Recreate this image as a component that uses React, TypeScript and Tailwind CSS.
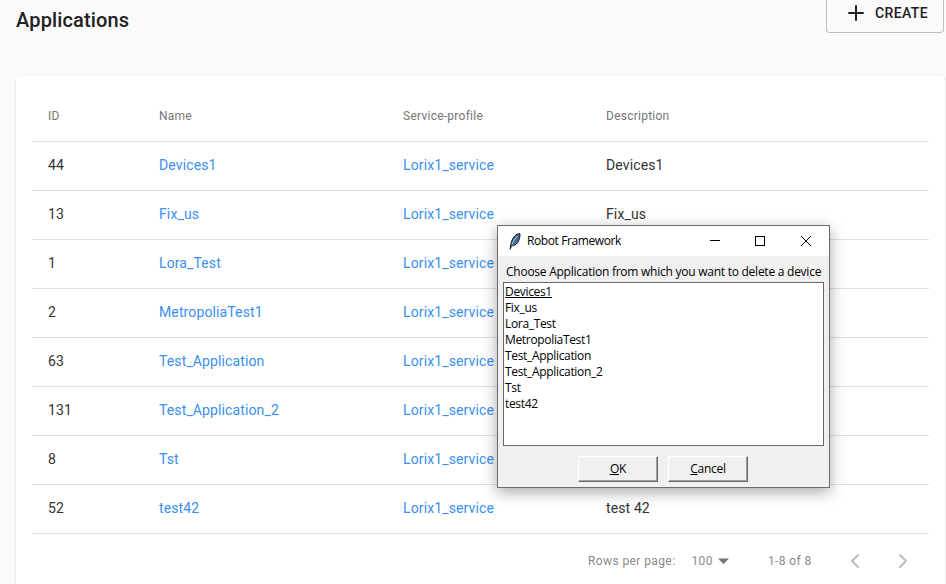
import { ChevronLeft, ChevronRight, Plus } from "lucide-react";

const rows = [
  ["44", "Devices1", "Devices1"],
  ["13", "Fix_us", "Fix_us"],
  ["1", "Lora_Test", "Lora_Test"],
  ["2", "MetropoliaTest1", "MetropoliaTest1"],
  ["63", "Test_Application", "Test_Application"],
  ["131", "Test_Application_2", "Test_Application_2"],
  ["8", "Tst", "Tst"],
  ["52", "test42", "test 42"],
];

const items = ["Devices1", "Fix_us", "Lora_Test", "MetropoliaTest1", "Test_Application", "Test_Application_2", "Tst", "test42"];

function Feather() {
  return (
    <svg width="12" height="17" viewBox="0 0 12 17" fill="none">
      <path d="M1.200 16.500C1.300 12 2.500 6.500 5.500 3.200 7 1.600 9 .7 10.800.6c.5 2-.2 5-1.300 7.400-1.100 2.300-3.200 4.200-5.500 4.800" fill="#4a6f96" stroke="#111" strokeWidth="1" />
      <path d="M3 11.500C4 8.500 5.500 6 8 3.500" stroke="#c8d8e8" strokeWidth="0.8" />
    </svg>
  );
}

function WinButton({ children }: { children: React.ReactNode }) {
  return <button className="w-[46px] h-[30px] flex items-center justify-center">{children}</button>;
}

function DlgButton({ u, rest }: { u: string; rest: string }) {
  return (
    <button className="w-20 h-[26px] bg-[#f0f0f0] border border-t-[#fff] border-l-[#fff] border-r-[#696969] border-b-[#696969] shadow-[inset_-1px_-1px_0_#a0a0a0] text-[12px] tracking-[-0.3px] text-black">
      <span className="underline">{u}</span>
      {rest}
    </button>
  );
}

export default function App() {
  return (
    <div className="relative w-[946px] h-[584px] overflow-hidden bg-[#fafafa] font-['Roboto',sans-serif]">
      <header className="flex justify-between items-start h-[33px] pl-4 pr-[2px]">
        <h1 className="text-[20px] leading-[40px] font-medium tracking-[0.15px] text-[#212121]">Applications</h1>
        <button className="w-[118px] h-[33px] flex items-center justify-center gap-[7px] pl-[2px] pb-[6px] border border-t-0 border-[#bdbdbd] rounded-b-[4px] text-[14px] font-medium tracking-[0.4px] text-[#212121]">
          <Plus size={24} strokeWidth={2} />
          CREATE
        </button>
      </header>

      <main className="mt-[43px] ml-4 mr-px bg-white rounded-[4px] shadow-[0_1px_3px_rgba(0,0,0,0.15)] px-4 pt-4 h-[600px]">
        <div className="grid grid-cols-[127px_244px_203px_1fr] h-[50px] pb-[2px] items-center border-b border-[#e0e0e0] text-[12px] tracking-[0.25px] text-[#757575]">
          <div className="pl-4">ID</div>
          <div>Name</div>
          <div>Service-profile</div>
          <div>Description</div>
        </div>
        {rows.map((r) => (
          <div key={r[0]} className="grid grid-cols-[127px_244px_203px_1fr] h-[49px] pb-[2px] items-center border-b border-[#e0e0e0] text-[14px] tracking-[0.12px] text-[#333333]">
            <div className="pl-4">{r[0]}</div>
            <div className="text-[#3a8fef]">{r[1]}</div>
            <div className="text-[#3a8fef]">Lorix1_service</div>
            <div>{r[2]}</div>
          </div>
        ))}
        <div className="flex items-center h-[53px] text-[12px] tracking-[0.4px] text-[#8a8a8a] pl-[556px]">
          <span>Rows per page:</span>
          <span className="ml-4">100</span>
          <svg className="ml-[5px]" width="11" height="6" viewBox="0 0 11 6"><path d="M0 0.500h11L5.500 6z" fill="#757575" /></svg>
          <span className="ml-[39px]">1-8 of 8</span>
          <ChevronLeft className="ml-[31px] text-[#bdbdbd]" size={24} />
          <ChevronRight className="ml-6 text-[#bdbdbd]" size={24} />
        </div>
      </main>

      <div className="absolute left-[497px] top-[225px] w-[333px] h-[263px] bg-[#f0f0f0] border border-[#6d6d6d] shadow-[0_4px_14px_rgba(0,0,0,0.35)] font-['Open_Sans',sans-serif] text-black">
        <div className="flex items-center justify-between h-[30px] bg-white pl-[11px]">
          <div className="flex items-center gap-[6px] text-[12px] tracking-[-0.4px]">
            <Feather />
            <span>Robot Framework</span>
          </div>
          <div className="flex">
            <WinButton><svg className="ml-[2px]" width="10" height="10" viewBox="0 0 10 10"><path d="M0 4.500h10" stroke="#000" /></svg></WinButton>
            <WinButton><svg width="10" height="10" viewBox="0 0 10 10"><rect x="0.500" y="0.500" width="9" height="9" fill="none" stroke="#000" /></svg></WinButton>
            <WinButton><svg width="10" height="10" viewBox="0 0 10 10"><path d="M0 0l10 10M10 0L0 10" stroke="#000" /></svg></WinButton>
          </div>
        </div>
        <div className="px-[5px]">
          <div className="h-[26px] flex items-center pt-[6px] pl-[3px] text-[12px] tracking-[-0.25px] whitespace-nowrap">Choose Application from which you want to delete a device</div>
          <div className="h-[164px] bg-white border border-[#696969] pl-px pt-px tracking-[-0.33px]">
            {items.map((t, i) => (
              <div key={t} className={`h-4 leading-4 text-[12px] ${i === 0 ? "underline" : ""}`}>{t}</div>
            ))}
          </div>
          <div className="flex justify-center gap-[10px] mt-[10px] pr-px">
            <DlgButton u="O" rest="K" />
            <DlgButton u="C" rest="ancel" />
          </div>
        </div>
      </div>
    </div>
  );
}
